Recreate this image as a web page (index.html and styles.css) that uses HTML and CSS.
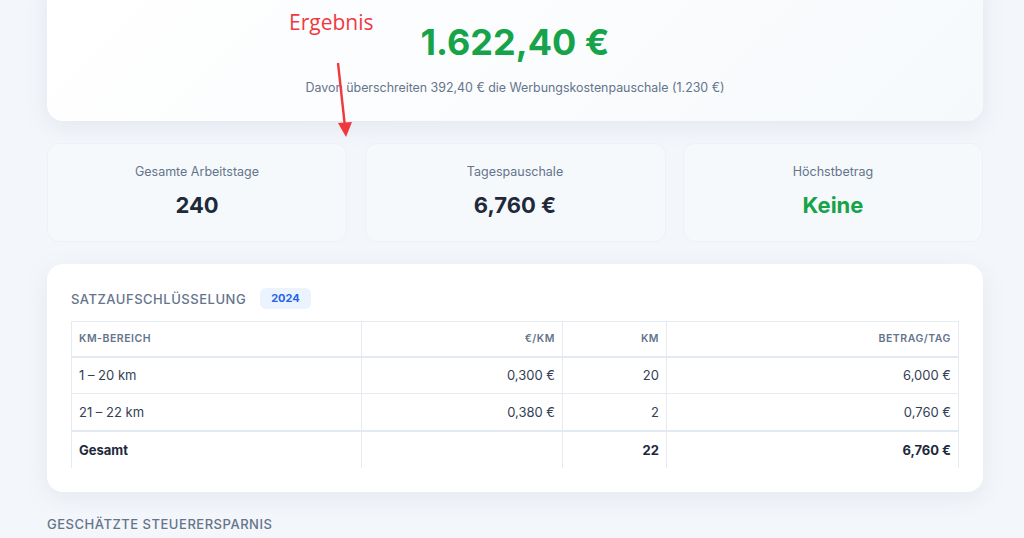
FILE: index.html
```html
<!DOCTYPE html>
<html lang="de">
<head>
    <meta charset="UTF-8">
    <meta name="viewport" content="width=device-width, initial-scale=1.0">
    <title>Pendlerpauschale Rechner</title>
    <link rel="stylesheet" href="styles.css">
</head>
<body>
    <div class="page">
        <!-- Ergebnis -->
        <section class="hero">
            <div class="hero-label">Absetzbare Pendlerpauschale</div>
            <div class="hero-amount">1.622,40 €</div>
            <div class="hero-note">Davon überschreiten 392,40 € die Werbungskostenpauschale (1.230 €)</div>
        </section>

        <div class="stats">
            <div class="stat">
                <div class="stat-label">Gesamte Arbeitstage</div>
                <div class="stat-value">240</div>
            </div>
            <div class="stat">
                <div class="stat-label">Tagespauschale</div>
                <div class="stat-value">6,760 €</div>
            </div>
            <div class="stat">
                <div class="stat-label">Höchstbetrag</div>
                <div class="stat-value green">Keine</div>
            </div>
        </div>

        <section class="breakdown">
            <div class="breakdown-head">
                <h2 class="section-title">Satzaufschlüsselung</h2>
                <span class="badge">2024</span>
            </div>
            <table class="rates">
                <thead>
                    <tr>
                        <th class="left">KM-Bereich</th>
                        <th>€/KM</th>
                        <th>KM</th>
                        <th>Betrag/Tag</th>
                    </tr>
                </thead>
                <tbody>
                    <tr>
                        <td class="left">1 – 20 km</td>
                        <td>0,300 €</td>
                        <td>20</td>
                        <td>6,000 €</td>
                    </tr>
                    <tr>
                        <td class="left">21 – 22 km</td>
                        <td>0,380 €</td>
                        <td>2</td>
                        <td>0,760 €</td>
                    </tr>
                    <tr class="total">
                        <td class="left">Gesamt</td>
                        <td></td>
                        <td>22</td>
                        <td>6,760 €</td>
                    </tr>
                </tbody>
            </table>
        </section>

        <h2 class="section-title savings">Geschätzte Steuerersparnis</h2>
    </div>

    <!-- Hinweis-Pfeil -->
    <div class="note">
        <span class="note-text">Ergebnis</span>
        <svg class="note-arrow" width="30" height="90" viewBox="0 0 30 90">
            <line x1="8" y1="2" x2="15" y2="66" stroke="#f0393f" stroke-width="2.4"/>
            <polygon points="8,62 22,61 16,76" fill="#f0393f"/>
        </svg>
    </div>
</body>
</html>
```

FILE: styles.css
```css
* {
    box-sizing: border-box;
    margin: 0;
    padding: 0;
}

body {
    background: #f3f6fa;
    font-family: Inter, "Noto Sans", sans-serif;
    color: #1e293b;
    overflow: hidden;
}

.page {
    padding: 0 41px 0 47px;
}

.hero {
    margin-top: -24px;
    padding: 14px 24px 26px;
    text-align: center;
    background: linear-gradient(135deg, #ffffff 0%, #f6f9fc 100%);
    border-radius: 16px;
    box-shadow: 0 6px 22px rgba(148, 163, 184, 0.16);
}

.hero-label {
    font-size: 11px;
    font-weight: 600;
    line-height: 12px;
    letter-spacing: 0.08em;
    text-transform: uppercase;
    color: #64748b;
    height: 12px;
}

.hero-amount {
    margin-top: 16px;
    font-size: 36px;
    font-weight: 700;
    line-height: 48px;
    color: #16a34a;
}

.hero-note {
    margin-top: 14px;
    font-size: 12.4px;
    line-height: 15px;
    color: #64748b;
}

.stats {
    display: grid;
    grid-template-columns: 300px 301px 300px;
    justify-content: space-between;
    margin-top: 22px;
}

.stat {
    height: 99px;
    padding-top: 20px;
    text-align: center;
    background: #f6f9fc;
    border: 1px solid #eef2f7;
    border-radius: 12px;
}

.stat-label {
    font-size: 12.5px;
    line-height: 15px;
    color: #64748b;
}

.stat-value {
    margin-top: 13px;
    font-size: 22px;
    line-height: 27px;
    font-weight: 700;
    color: #1e293b;
}

.stat-value.green {
    color: #16a34a;
}

.breakdown {
    margin-top: 22px;
    padding: 24px 24px 24px;
    background: #fff;
    border-radius: 16px;
    box-shadow: 0 6px 22px rgba(148, 163, 184, 0.14);
}

.breakdown-head {
    display: flex;
    align-items: center;
    gap: 14px;
    margin-bottom: 12px;
}

.section-title {
    font-size: 13px;
    line-height: 16px;
    font-weight: 500;
    letter-spacing: 0.04em;
    text-transform: uppercase;
    color: #64748b;
}

.badge {
    padding: 3px 11px;
    font-size: 11px;
    line-height: 15px;
    font-weight: 700;
    color: #2563eb;
    background: #eaf3fe;
    border-radius: 6px;
}

.rates {
    width: 100%;
    border-collapse: collapse;
    font-size: 13px;
}

.rates th,
.rates td {
    padding: 0 7px;
    text-align: right;
    border: 1px solid #e6ebf1;
}

.rates th {
    height: 35px;
    font-size: 10.5px;
    font-weight: 600;
    letter-spacing: 0.05em;
    text-transform: uppercase;
    color: #64748b;
    border-bottom: 2px solid #e3e9f0;
}

.rates td {
    height: 37px;
    color: #334155;
}

.rates th:nth-child(1) { width: 290px; }
.rates th:nth-child(2) { width: 201px; }
.rates th:nth-child(3) { width: 104px; }

.rates .left {
    text-align: left;
}

.rates tr.total td {
    font-weight: 700;
    color: #1e293b;
    border-top: 2px solid #e3e9f0;
    border-bottom: none;
}

.savings {
    margin-top: 24px;
}

.note {
    position: absolute;
    left: 289px;
    top: 8px;
}

.note-text {
    display: block;
    font-family: "Open Sans", sans-serif;
    font-size: 21px;
    color: #f0393f;
}

.note-arrow {
    position: absolute;
    left: 41px;
    top: 53px;
}
```
